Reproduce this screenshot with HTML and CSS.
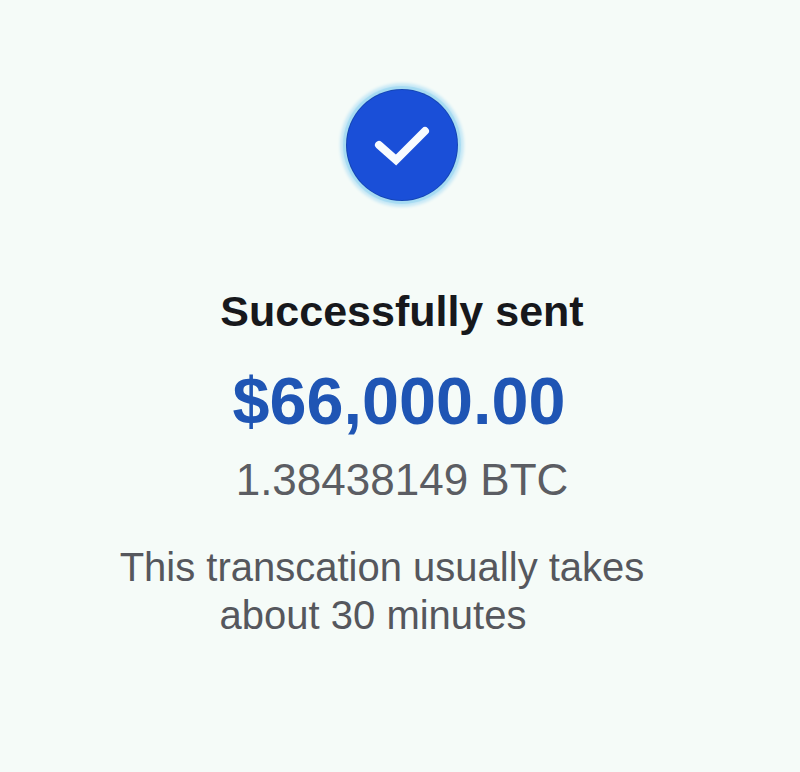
FILE: index.html
```html
<!DOCTYPE html>
<html lang="en">

<head>
    <meta charset="UTF-8">
    <meta name="viewport" content="width=device-width, initial-scale=1.0">
    <title>Successfully sent</title>
    <link rel="stylesheet" href="styles.css">
</head>

<body>
    <main class="receipt">
        <div class="badge">
            <svg class="badge-check" viewBox="0 0 110 110" width="110" height="110" aria-hidden="true">
                <path d="M32 55 L49 70 L78 41" fill="none" stroke="#f7fbff" stroke-width="8" stroke-linecap="round" stroke-linejoin="miter"/>
            </svg>
        </div>
        <h1 class="title">Successfully sent</h1>
        <p class="amount">$66,000.00</p>
        <p class="crypto">1.38438149 BTC</p>
        <p class="note">
            <span class="note-line">This transcation usually takes</span>
            <span class="note-line note-line-short">about 30 minutes</span>
        </p>
    </main>
</body>

</html>
```

FILE: styles.css
```css
body {
    margin: 0;
    background: #f5fbf8;
    font-family: "Liberation Sans", Arial, sans-serif;
}

.receipt {
    display: flex;
    flex-direction: column;
    align-items: center;
    height: 772px;
    padding-top: 90px;
    padding-left: 4px;
    box-sizing: border-box;
    overflow: hidden;
}

.badge {
    display: flex;
    width: 110px;
    height: 110px;
    border-radius: 50%;
    background: #1a4fd8;
    box-shadow: 0 0 0 1px #1546b4, 0 0 1px 4px #a6dbf2, 0 0 3px 7px #c9e9f6;
}

.title {
    margin: 86px 0 0;
    font-size: 43px;
    line-height: 50px;
    font-weight: 700;
    color: #17181c;
}

.amount {
    margin: 30px 6px 0 0;
    font-size: 66.5px;
    line-height: 70px;
    font-weight: 700;
    color: #1f55b4;
}

.crypto {
    margin: 19px 0 0;
    font-size: 44px;
    line-height: 50px;
    color: #5b5d63;
}

.note {
    margin: 38px 0 0;
    font-size: 40px;
    line-height: 48px;
    color: #55575d;
    text-align: center;
}

.note-line {
    display: block;
    padding-right: 40px;
}

.note-line-short {
    padding-right: 58px;
}
```
